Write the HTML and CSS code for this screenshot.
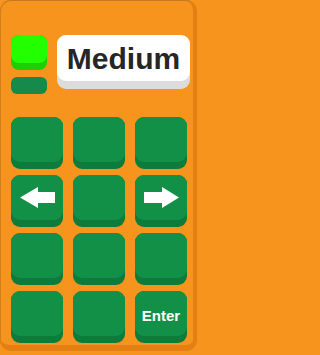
FILE: index.html
```html
<!DOCTYPE html>
<html>
<head>
<meta charset="utf-8">
<link rel="stylesheet" href="styles.css">
</head>
<body>
<div class="panel">
  <div class="header">
    <div class="indicators">
      <div class="lamp"><div class="lamp-face"></div></div>
      <div class="pill"></div>
    </div>
    <div class="level"><div class="level-face">Medium</div></div>
  </div>
  <div class="pad">
    <div class="key"><div class="face"></div></div>
    <div class="key"><div class="face"></div></div>
    <div class="key"><div class="face"></div></div>
    <div class="key"><div class="face">
      <svg class="arrow" viewBox="0 0 35 21" width="35" height="21"><polygon points="0,10.5 18,0 18,5 35,5 35,16 18,16 18,21" fill="#fff"/></svg>
    </div></div>
    <div class="key"><div class="face"></div></div>
    <div class="key"><div class="face">
      <svg class="arrow" viewBox="0 0 35 21" width="35" height="21"><polygon points="35,10.5 18,0 18,5 0,5 0,16 18,16 18,21" fill="#fff"/></svg>
    </div></div>
    <div class="key"><div class="face"></div></div>
    <div class="key"><div class="face"></div></div>
    <div class="key"><div class="face"></div></div>
    <div class="key"><div class="face"></div></div>
    <div class="key"><div class="face"></div></div>
    <div class="key"><div class="face"><span class="enter">Enter</span></div></div>
  </div>
</div>
</body>
</html>
```
FILE: styles.css
```css
html, body {
  margin: 0;
  padding: 0;
  background: #f7941d;
  width: 200px;
  height: 355px;
  overflow: hidden;
  font-family: "Liberation Sans", Arial, sans-serif;
}
.panel {
  box-sizing: border-box;
  width: 197px;
  height: 351px;
  background: #f7941d;
  border-radius: 11px;
  border-top: 1px solid #c47a22;
  border-left: 1px solid #d27f1c;
  border-right: 4px solid #e47f14;
  border-bottom: 6px solid #e47f14;
  padding: 34px 0 0 10px;
}
.header {
  display: flex;
  gap: 10px;
  align-items: flex-start;
}
.indicators {
  display: flex;
  flex-direction: column;
  gap: 7px;
  width: 36px;
}
.lamp {
  height: 35px;
  border-radius: 8px;
  background: #1fcf06;
}
.lamp-face {
  height: 28px;
  border-radius: 8px;
  background: #22ff00;
}
.pill {
  height: 17px;
  border-radius: 6px;
  background: #158a4a;
}
.level {
  width: 133px;
  height: 54px;
  border-radius: 9px;
  background: #dcdcdc;
}
.level-face {
  height: 46px;
  border-radius: 9px;
  background: #fff;
  display: flex;
  align-items: center;
  justify-content: center;
  font-weight: bold;
  font-size: 30px;
  color: #262626;
  padding-top: 1px;
  box-sizing: border-box;
}
.pad {
  margin-top: 23px;
  display: grid;
  grid-template-columns: 52px 52px 52px;
  grid-auto-rows: 52px;
  column-gap: 10px;
  row-gap: 6px;
}
.key {
  border-radius: 9px;
  background: #0d7b3c;
}
.face {
  height: 45px;
  border-radius: 9px;
  background: #139047;
  display: flex;
  align-items: center;
  justify-content: center;
}
.arrow {
  display: block;
}
.enter {
  color: #fff;
  font-weight: bold;
  font-size: 15px;
  margin-top: 3px;
}
```
